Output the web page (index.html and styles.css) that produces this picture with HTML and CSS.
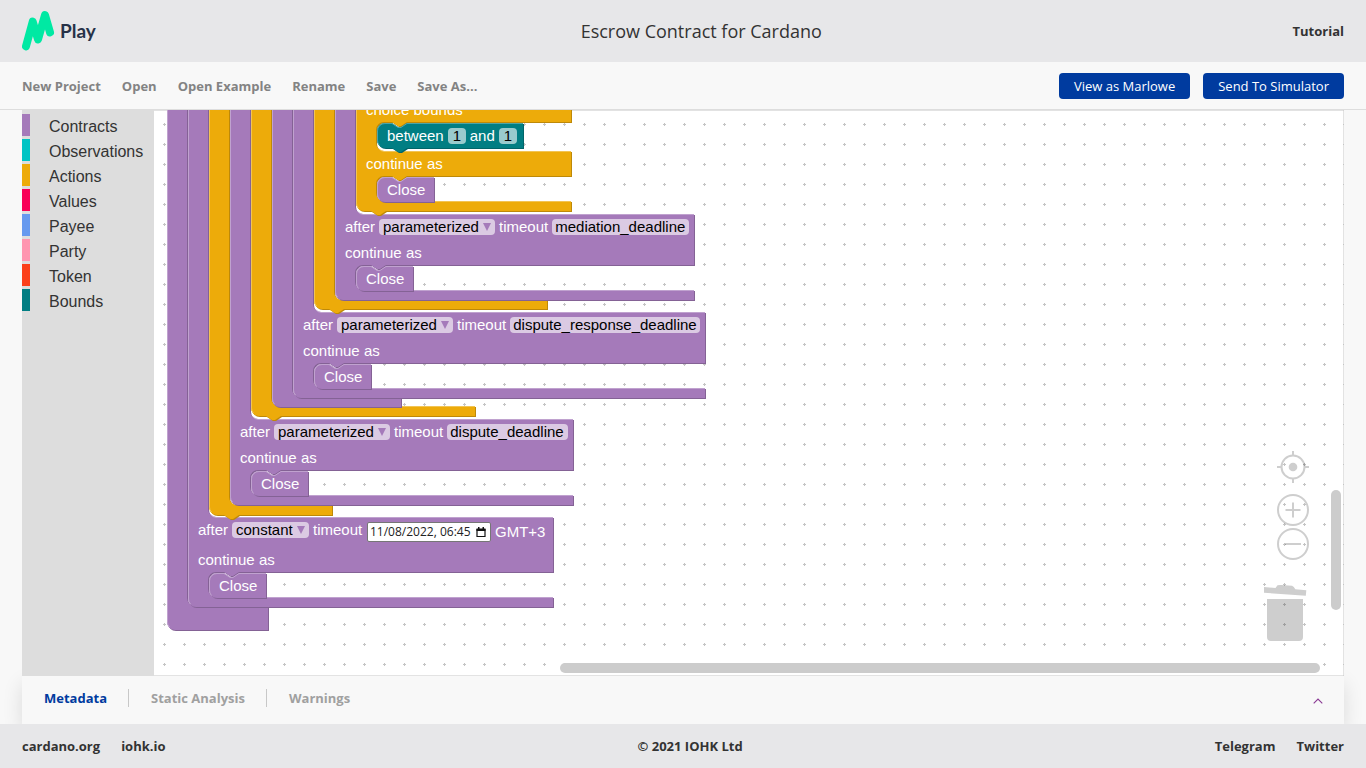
FILE: index.html
```html
<!DOCTYPE html>
<html lang="en">
<head>
<meta charset="utf-8">
<title>Marlowe Playground</title>
<link rel="stylesheet" href="styles.css">
</head>
<body>
<header class="topbar">
  <a class="logo" href="#" aria-label="Marlowe Play">
    <svg class="logo-mark" width="34" height="42" viewBox="0 0 34 42" aria-hidden="true"><path d="M4 36.300 10.700 11.700 16 29.300 23 5 28 22.300" fill="none" stroke="#00e9a3" stroke-width="8" stroke-linecap="round" stroke-linejoin="round"/></svg>
    <span>Play</span>
  </a>
  <h1>Escrow Contract for Cardano</h1>
  <a class="strong-link" href="#">Tutorial</a>
</header>
<nav class="menubar">
  <div class="menu">
    <a href="#">New Project</a><a href="#">Open</a><a href="#">Open Example</a><a href="#">Rename</a><a href="#">Save</a><a href="#">Save As...</a>
  </div>
  <div class="actions"><button type="button">View as Marlowe</button><button type="button">Send To Simulator</button></div>
</nav>
<main class="editor">
  <div class="toolbox">
    <button type="button" class="cat c-contracts">Contracts</button>
    <button type="button" class="cat c-observations">Observations</button>
    <button type="button" class="cat c-actions">Actions</button>
    <button type="button" class="cat c-values">Values</button>
    <button type="button" class="cat c-payee">Payee</button>
    <button type="button" class="cat c-party">Party</button>
    <button type="button" class="cat c-token">Token</button>
    <button type="button" class="cat c-bounds">Bounds</button>
  </div>
  <div class="canvas">
    <svg class="shapes" aria-hidden="true">
      <defs>
        <pattern id="grid" width="20" height="20" x="12" y="4" patternUnits="userSpaceOnUse"><path d="M9 10.500h3M10.500 9v3" stroke="#c4c4c4"/></pattern>
        <path id="close" d="M0 8A8 8 0 0 1 8 0H15l6 4h3l6-4H57V25H8a8 8 0 0 1-8-8z"/>
        <g id="closeBlock">
          <use href="#close" class="contract-dark" transform="translate(1 1)"/>
          <use href="#close" class="contract"/>
          <path class="contract-light" d="M2.500 22.500A8 8 0 0 1 .5 17V8A7.500 7.500 0 0 1 8 .5H15l6 4h3l6-4H57"/>
        </g>
        <path id="sA" d="M167 90V622a8 8 0 0 0 8 8H268V606H195a8 8 0 0 1-8-8V90z"/>
        <path id="sB" d="M188 90V599a8 8 0 0 0 8 8H553V597H216a8 8 0 0 1-8-8V580a8 8 0 0 1 8-8h8l6 4h3l6-4H553V517H216a8 8 0 0 1-8-8V90z"/>
        <path id="sC" d="M209 90V507a8 8 0 0 0 8 8H224l6 4h3l6-4H332V505H237a8 8 0 0 1-8-8V90z"/>
        <path id="sD" d="M230 90V497a8 8 0 0 0 8 8H573V495H258a8 8 0 0 1-8-8V478a8 8 0 0 1 8-8h8l6 4h3l6-4H573V419H258a8 8 0 0 1-8-8V90z"/>
        <path id="sE" d="M251 90V408a8 8 0 0 0 8 8H266l6 4h3l6-4H475V406H279a8 8 0 0 1-8-8V90z"/>
        <path id="sF" d="M272 90V399a8 8 0 0 0 8 8H401V397H300a8 8 0 0 1-8-8V90z"/>
        <path id="sG" d="M293 90V390a8 8 0 0 0 8 8H705V388H321a8 8 0 0 1-8-8V371a8 8 0 0 1 8-8h8l6 4h3l6-4H705V312H321a8 8 0 0 1-8-8V90z"/>
        <path id="sH" d="M314 90V301a8 8 0 0 0 8 8H329l6 4h3l6-4H547V300H342a8 8 0 0 1-8-8V90z"/>
        <path id="sI" d="M335 90V292a8 8 0 0 0 8 8H694V290H363a8 8 0 0 1-8-8V273a8 8 0 0 1 8-8h8l6 4h3l6-4H694V214H363a8 8 0 0 1-8-8V90z"/>
        <path id="sJ" d="M356 90V203a8 8 0 0 0 8 8H371l6 4h3l6-4H571V201H384a8 8 0 0 1-8-8V184a8 8 0 0 1 8-8h8l6 4h3l6-4H571V151H384a8 8 0 0 1-8-8V130a8 8 0 0 1 8-8h8l6 4h3l6-4H571V90z"/>
        <path id="sK" d="M377 131a8 8 0 0 1 8-8H392l6 4h3l6-4H523V148H407l-6 4h-3l-6-4H385a8 8 0 0 1-8-8z"/>
      </defs>
      <rect width="100%" height="100%" fill="#fff"/>
      <rect width="100%" height="100%" fill="url(#grid)" stroke="#c6c6c6"/>
      <g transform="translate(-22 -110)">
        <use href="#sA" class="contract-dark" transform="translate(1 1)"/><use href="#sA" class="contract"/>
        <path class="contract-light" d="M167.500 90V622a7.500 7.500 0 0 0 2 5"/>
        <use href="#sB" class="contract-dark" transform="translate(1 1)"/><use href="#sB" class="contract"/>
        <path class="contract-light" d="M188.500 90V599a7.500 7.500 0 0 0 2 5M211 515a8 8 0 0 0 5 2.500H553M211 595a8 8 0 0 0 5 2.500H553"/>
        <use href="#closeBlock" x="209" y="573"/>
        <use href="#sC" class="action-dark" transform="translate(1 1)"/><use href="#sC" class="action"/>
        <path class="action-light" d="M209.500 90V507a7.500 7.500 0 0 0 2 5"/>
        <use href="#sD" class="contract-dark" transform="translate(1 1)"/><use href="#sD" class="contract"/>
        <path class="contract-light" d="M230.500 90V497a7.500 7.500 0 0 0 2 5M253 417a8 8 0 0 0 5 2.500H573M253 493a8 8 0 0 0 5 2.500H573"/>
        <use href="#closeBlock" x="251" y="471"/>
        <use href="#sE" class="action-dark" transform="translate(1 1)"/><use href="#sE" class="action"/>
        <path class="action-light" d="M251.500 90V408a7.500 7.500 0 0 0 2 5M279 406.500H475"/>
        <use href="#sF" class="contract-dark" transform="translate(1 1)"/><use href="#sF" class="contract"/>
        <path class="contract-light" d="M272.500 90V399a7.500 7.500 0 0 0 2 5"/>
        <use href="#sG" class="contract-dark" transform="translate(1 1)"/><use href="#sG" class="contract"/>
        <path class="contract-light" d="M293.500 90V390a7.500 7.500 0 0 0 2 5M316 310a8 8 0 0 0 5 2.500H705M316 386a8 8 0 0 0 5 2.500H705"/>
        <use href="#closeBlock" x="314" y="364"/>
        <use href="#sH" class="action-dark" transform="translate(1 1)"/><use href="#sH" class="action"/>
        <path class="action-light" d="M314.500 90V301a7.500 7.500 0 0 0 2 5"/>
        <use href="#sI" class="contract-dark" transform="translate(1 1)"/><use href="#sI" class="contract"/>
        <path class="contract-light" d="M335.500 90V292a7.500 7.500 0 0 0 2 5M358 212a8 8 0 0 0 5 2.500H694M358 288a8 8 0 0 0 5 2.500H694"/>
        <use href="#closeBlock" x="356" y="266"/>
        <use href="#sJ" class="action-dark" transform="translate(1 1)"/><use href="#sJ" class="action"/>
        <path class="action-light" d="M356.500 90V203a7.500 7.500 0 0 0 2 5M379 149a8 8 0 0 0 5 2.500H571M379 199a8 8 0 0 0 5 2.500H571"/>
        <use href="#sK" class="bound-dark" transform="translate(1 1)"/><use href="#sK" class="bound"/>
        <path class="bound-light" d="M379.500 145.500A8 8 0 0 1 377.500 140V131a7.500 7.500 0 0 1 7.500-7.500H392l6 4h3l6-4H523"/>
        <use href="#closeBlock" x="377" y="177"/>
      </g>
    </svg>

    <div class="row p-choice">choice bounds</div>
    <div class="row p-between"><label for="lo">between</label><input class="chip num" id="lo" value="1"><label for="hi">and</label><input class="chip num" id="hi" value="1"></div>
    <div class="row p-cont1">continue as</div>
    <div class="row p-close1">Close</div>

    <div class="row p-after1"><label for="k1">after</label><span class="drop"><select id="k1" class="chip"><option>parameterized</option></select></span><label for="t1">timeout</label><input class="chip w-mediation" id="t1" value="mediation_deadline"></div>
    <div class="row p-cont2">continue as</div>
    <div class="row p-close2">Close</div>

    <div class="row p-after2"><label for="k2">after</label><span class="drop"><select id="k2" class="chip"><option>parameterized</option></select></span><label for="t2">timeout</label><input class="chip w-response" id="t2" value="dispute_response_deadline"></div>
    <div class="row p-cont3">continue as</div>
    <div class="row p-close3">Close</div>

    <div class="row p-after3"><label for="k3">after</label><span class="drop"><select id="k3" class="chip"><option>parameterized</option></select></span><label for="t3">timeout</label><input class="chip w-dispute" id="t3" value="dispute_deadline"></div>
    <div class="row p-cont4">continue as</div>
    <div class="row p-close4">Close</div>

    <div class="row p-after4"><label for="k4">after</label><span class="drop"><select id="k4" class="chip"><option>constant</option></select></span><label for="t4">timeout</label></div>
    <div class="row p-date"><span class="date"><input id="t4" value="11/08/2022, 06:45"><svg width="10" height="11" viewBox="0 0 10 11" aria-hidden="true"><path d="M1 2.500h8v7H1z" fill="none" stroke="#111" stroke-width="1.200"/><path d="M.5 1.500h9v2.500h-9zM2 0h1.500v2H2zM6.500 0H8v2H6.500z" fill="#111"/></svg></span><span>GMT+3</span></div>
    <div class="row p-cont5">continue as</div>
    <div class="row p-close5">Close</div>

    <div class="controls">
      <button type="button" aria-label="Center"><svg width="34" height="34" viewBox="0 0 34 34"><g fill="none" stroke="#000" stroke-width="2"><circle cx="17" cy="17" r="11.500"/><path d="M17 1v4M17 29v4M1 17h4M29 17h4"/></g><circle cx="17" cy="17" r="4.300"/></svg></button>
      <button type="button" class="zoom-in" aria-label="Zoom in"><svg width="34" height="34" viewBox="0 0 34 34" fill="none" stroke="#000" stroke-width="2"><circle cx="17" cy="17" r="15"/><path d="M9.500 17h15M17 9.500v15"/></svg></button>
      <button type="button" aria-label="Zoom out"><svg width="34" height="34" viewBox="0 0 34 34" fill="none" stroke="#000" stroke-width="2"><circle cx="17" cy="17" r="15"/><path d="M9 17h16"/></svg></button>
    </div>
    <svg class="trash" width="44" height="58" viewBox="0 0 44 58" aria-hidden="true"><path d="M1 4 12.500 4.900 14.500 2.300Q16 1.800 18 1.900L29 2.800Q31 3.300 32.300 6.300L43.300 7.200 42.800 12.800 1 9.700zM4 16H40V54a4 4 0 0 1-4 4H8a4 4 0 0 1-4-4z"/></svg>
    <div class="bar-v"></div>
    <div class="bar-h"></div>
  </div>
</main>
<section class="panel">
  <div class="tabs"><button type="button" class="active">Metadata</button><button type="button">Static Analysis</button><button type="button">Warnings</button></div>
  <button type="button" class="expand" aria-label="Expand panel"><svg width="10" height="6" viewBox="0 0 10 6"><path d="M.7 5.300 5 1l4.300 4.300" fill="none" stroke="#8a3a94" stroke-width="1.100"/></svg></button>
</section>
<footer class="footer">
  <div class="links"><a href="#">cardano.org</a><a href="#">iohk.io</a></div>
  <span>© 2021 IOHK Ltd</span>
  <div class="links"><a href="#">Telegram</a><a href="#">Twitter</a></div>
</footer>
</body>
</html>
```
FILE: styles.css
```css
* { box-sizing: border-box; }
body {
  margin: 0;
  min-height: 100vh;
  display: flex;
  flex-direction: column;
  background: #f8f8f8;
  color: #333;
  font: 13px/18px "Open Sans", sans-serif;
  overflow: hidden;
}
a { color: inherit; text-decoration: none; }
button { font: inherit; border: 0; padding: 0; background: none; color: inherit; cursor: pointer; }

.topbar {
  display: flex;
  align-items: center;
  justify-content: space-between;
  height: 62px;
  padding: 0 22px;
  background: #e7e7e9;
}
.logo {
  display: flex;
  align-items: center;
  gap: 4px;
  width: 88px;
  color: #263248;
  font: bold 19px/24px Lato, sans-serif;
}
.topbar h1 { margin: 0; font-size: 18px; line-height: 24px; font-weight: 400; }
.strong-link { font-weight: 700; }

.menubar {
  display: flex;
  align-items: center;
  justify-content: space-between;
  height: 48px;
  padding: 0 22px;
  border-bottom: 1px solid #ddd;
}
.menu { display: flex; gap: 21px; color: #838383; font-weight: 700; }
.actions { display: flex; gap: 13px; }
.actions button { padding: 4px 15px; border-radius: 4px; background: #003b9f; color: #fff; }

.editor { position: relative; z-index: 1; flex: 1; display: flex; margin: 0 22px; }
.toolbox {
  position: relative;
  z-index: 1;
  display: flex;
  flex-direction: column;
  gap: 3px;
  width: 132px;
  padding-top: 4px;
  background: #ddd;
}
.cat {
  height: 22px;
  padding: 2px 0 0 19px;
  border-left: 8px solid;
  text-align: left;
  font: 16px/22px "Liberation Sans", Arial, sans-serif;
  color: #333;
}
.c-contracts { border-color: #a57aba; }
.c-observations { border-color: #00c4c4; }
.c-actions { border-color: #edab0a; }
.c-values { border-color: #f90058; }
.c-payee { border-color: #6699ef; }
.c-party { border-color: #ff95b0; }
.c-token { border-color: #fb3f1a; }
.c-bounds { border-color: #017e83; }

/* Block workspace: everything on it sits at its own canvas position. */
.canvas { position: absolute; inset: 0; overflow: hidden; }
.shapes { position: absolute; inset: 0; width: 100%; height: 100%; }
.contract { fill: #a57aba; }
.contract-dark { fill: #846295; }
.contract-light { fill: none; stroke: #c0a2cf; }
.action { fill: #edab0a; }
.action-dark { fill: #be8908; }
.action-light { fill: none; stroke: #f2c454; }
.bound { fill: #017e83; }
.bound-dark { fill: #016569; }
.bound-light { fill: none; stroke: #4da5a8; }

.row {
  position: absolute;
  display: flex;
  align-items: center;
  gap: 4px;
  height: 18px;
  white-space: nowrap;
  color: #fff;
  font: 15px/18px "Liberation Sans", Arial, sans-serif;
}
.chip {
  height: 16px;
  border: 0;
  border-radius: 4px;
  padding: 0 3px;
  background: #dbcae3;
  color: #000;
  font: 15px/16px "Liberation Sans", Arial, sans-serif;
  appearance: none;
}
.drop { position: relative; display: flex; }
.drop select { padding: 0 16px 0 4px; }
.drop::after {
  content: "";
  position: absolute;
  right: 4px;
  top: 4px;
  border: 4px solid transparent;
  border-top: 8px solid #a57aba;
  border-bottom: 0;
  pointer-events: none;
}
.num { width: 18px; padding: 0 5px; background: #99cbcd; }
.w-mediation { width: 137px; }
.w-response { width: 190px; }
.w-dispute { width: 121px; }
.date {
  display: flex;
  align-items: center;
  width: 124px;
  height: 20px;
  padding: 0 4px 0 2px;
  border: 1px solid #767676;
  border-radius: 2px;
  background: #fff;
}
.date input {
  flex: 1;
  min-width: 0;
  border: 0;
  padding: 0;
  background: none;
  color: #222;
  font: 12px/16px "Open Sans", sans-serif;
}

.p-choice { left: 344px; top: -9px; }
.p-between { left: 365px; top: 17px; }
.p-cont1 { left: 344px; top: 45px; }
.p-close1 { left: 365px; top: 71px; }
.p-after1 { left: 323px; top: 108px; }
.p-cont2 { left: 323px; top: 134px; }
.p-close2 { left: 344px; top: 160px; }
.p-after2 { left: 281px; top: 206px; }
.p-cont3 { left: 281px; top: 232px; }
.p-close3 { left: 302px; top: 258px; }
.p-after3 { left: 218px; top: 313px; }
.p-cont4 { left: 218px; top: 339px; }
.p-close4 { left: 239px; top: 365px; }
.p-after4 { left: 176px; top: 411px; }
.p-date { left: 345px; top: 413px; }
.p-cont5 { left: 176px; top: 441px; }
.p-close5 { left: 197px; top: 467px; }

.controls {
  position: absolute;
  right: 34px;
  bottom: 115px;
  display: flex;
  flex-direction: column;
}
.controls button { display: flex; opacity: 0.19; }
.controls .zoom-in { margin-top: 9px; }
.trash { position: absolute; right: 37px; bottom: 35px; fill: #000; opacity: 0.19; }
.bar-v, .bar-h { position: absolute; border-radius: 5px; background: #ccc; }
.bar-v { right: 3px; bottom: 66px; width: 10px; height: 120px; }
.bar-h { right: 24px; bottom: 3px; width: 760px; height: 10px; }

.panel {
  display: flex;
  align-items: center;
  justify-content: space-between;
  height: 48px;
  margin: 0 22px;
  padding: 0 21px 0 22px;
  background: #f8f8f8;
  box-shadow: 0 8px 20px rgba(0, 0, 0, 0.12);
}
.tabs { display: flex; margin-bottom: 4px; font-weight: 700; color: #a0a0a0; }
.tabs button + button { margin-left: 21px; padding-left: 22px; border-left: 1px solid #c8c8c8; }
.tabs .active { color: #003b9f; }
.expand { display: flex; margin-top: 2px; }

.footer {
  position: relative;
  display: flex;
  align-items: center;
  justify-content: space-between;
  height: 44px;
  padding: 0 22px;
  background: #e7e7e9;
  font-weight: 700;
}
.links { display: flex; gap: 21px; }
```
